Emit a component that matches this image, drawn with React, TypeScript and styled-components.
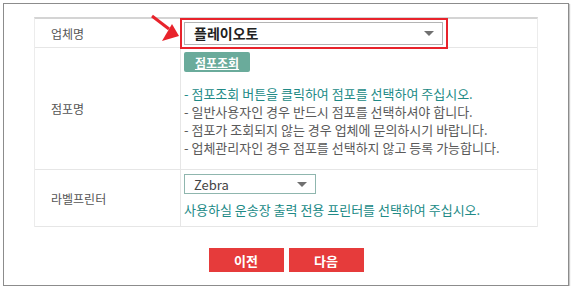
import React from "react";
import styled, { createGlobalStyle } from "styled-components";

const Global = createGlobalStyle`
  html, body { margin: 0; padding: 0; background: #ffffff; }
  body { font-family: "Noto Sans CJK KR", "Noto Sans", sans-serif; }
  * { box-sizing: border-box; }
`;

const Frame = styled.div`
  position: relative;
  margin: 3px 0 0 3px;
  width: 566px;
  height: 283px;
  border: 1px solid #8c8c8c;
  box-shadow: 1px 1px 1px #c8c8c8;
  background: #fff;
  padding: 13px 0 0 30px;
  display: flex;
  flex-direction: column;
`;

const Table = styled.div`
  width: 504px;
  display: grid;
  grid-template-columns: 146px 1fr;
  border-top: 2px solid #d4d4d4;
  border-left: 1px solid #ececec;
  border-right: 1px solid #ececec;
`;

const Label = styled.div<{ $h: number }>`
  height: ${(p) => p.$h}px;
  border-bottom: 1px solid #e6e6e6;
  border-right: 1px solid #e6e6e6;
  display: flex;
  align-items: center;
  padding-left: 16px;
  font-size: 12px;
  color: #555;
`;

const Cell = styled.div<{ $h: number }>`
  height: ${(p) => p.$h}px;
  border-bottom: 1px solid #e6e6e6;
  padding: 4px 0 0 3px;
  display: flex;
  flex-direction: column;
  align-items: flex-start;
`;

const TopCell = styled.div`
  height: 29px;
  border-bottom: 1px solid #e6e6e6;
  display: flex;
  align-items: center;
  position: relative;
`;

const Highlight = styled.div`
  margin: -2px 0 -2px -1px;
  width: 268px;
  height: 31px;
  border: 2px solid #e8232b;
  padding: 2px 3px 2px 2px;
`;

const BigSelect = styled.div`
  height: 100%;
  border: 1px solid #b4b4b4;
  display: flex;
  align-items: center;
  justify-content: space-between;
  padding: 0 8px 0 9px;
  font-size: 14px;
  font-weight: 700;
  color: #222;
`;

const Caret = styled.span`
  width: 0;
  height: 0;
  border-left: 5px solid transparent;
  border-right: 5px solid transparent;
  border-top: 5px solid #707070;
`;

const TealButton = styled.div`
  width: 66px;
  height: 20px;
  background: #6aab9b;
  border-radius: 2px;
  color: #fff;
  font-size: 12px;
  font-weight: 700;
  text-decoration: underline;
  display: flex;
  align-items: center;
  justify-content: center;
`;

const Notes = styled.div`
  margin-top: 13px;
  display: flex;
  flex-direction: column;
  font-size: 13px;
  line-height: 18px;
  color: #5a5a5a;
`;

const Note = styled.div<{ $teal?: boolean }>`
  color: ${(p) => (p.$teal ? "#218a86" : "#5a5a5a")};
  white-space: nowrap;
`;

const SmallSelect = styled.div`
  width: 132px;
  height: 20px;
  border: 1px solid #8fb6ae;
  display: flex;
  align-items: center;
  justify-content: space-between;
  padding: 0 8px 0 9px;
  font-size: 13px;
  color: #444;
`;

const Helper = styled.div`
  margin-top: 6px;
  font-size: 13px;
  color: #218a86;
  white-space: nowrap;
`;

const Buttons = styled.div`
  margin: 21px 0 0 -30px;
  display: flex;
  justify-content: center;
  gap: 5px;
`;

const RedButton = styled.div`
  width: 75px;
  height: 24px;
  background: #e63b3b;
  color: #fff;
  font-size: 13px;
  font-weight: 700;
  display: flex;
  align-items: center;
  justify-content: center;
`;

const Arrow = styled.svg`
  position: absolute;
  left: 148px;
  top: 12px;
  overflow: visible;
`;

export default function App() {
  return (
    <>
      <Global />
      <Frame>
        <Arrow width="28" height="26" viewBox="0 0 28 26">
          <line x1="0" y1="0" x2="17" y2="13" stroke="#e8232b" strokeWidth="3" />
          <polygon points="27,20 10,25 20,8" fill="#e8232b" />
        </Arrow>
        <Table>
          <Label $h={29}>업체명</Label>
          <TopCell>
            <Highlight>
              <BigSelect>
                <span>플레이오토</span>
                <Caret />
              </BigSelect>
            </Highlight>
          </TopCell>
          <Label $h={122}>점포명</Label>
          <Cell $h={122}>
            <TealButton>점포조회</TealButton>
            <Notes>
              <Note $teal>- 점포조회 버튼을 클릭하여 점포를 선택하여 주십시오.</Note>
              <Note>- 일반사용자인 경우 반드시 점포를 선택하셔야 합니다.</Note>
              <Note>- 점포가 조회되지 않는 경우 업체에 문의하시기 바랍니다.</Note>
              <Note>- 업체관리자인 경우 점포를 선택하지 않고 등록 가능합니다.</Note>
            </Notes>
          </Cell>
          <Label $h={57}>라벨프린터</Label>
          <Cell $h={57}>
            <SmallSelect>
              <span>Zebra</span>
              <Caret />
            </SmallSelect>
            <Helper>사용하실 운송장 출력 전용 프린터를 선택하여 주십시오.</Helper>
          </Cell>
        </Table>
        <Buttons>
          <RedButton>이전</RedButton>
          <RedButton>다음</RedButton>
        </Buttons>
      </Frame>
    </>
  );
}
